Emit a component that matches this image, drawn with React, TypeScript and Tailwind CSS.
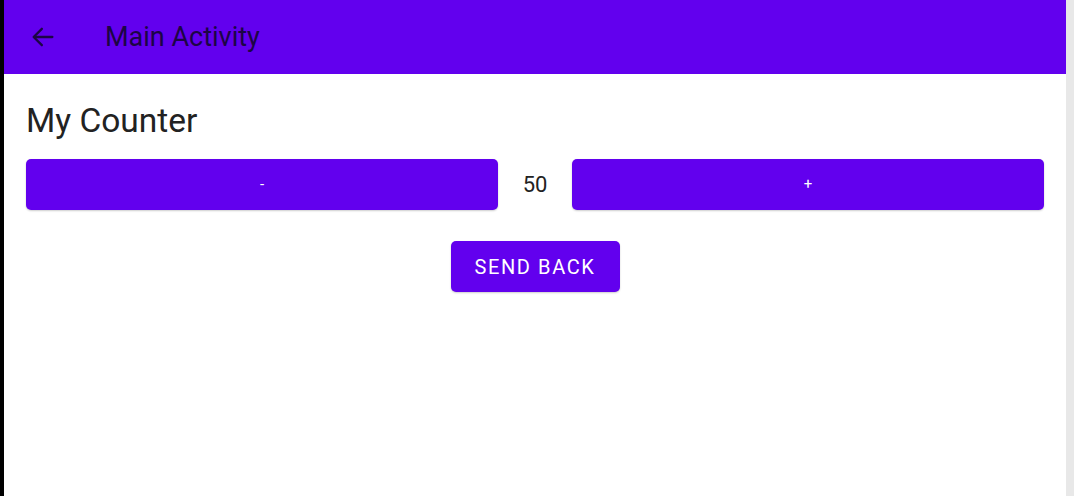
import { useState } from 'react'

const ArrowBack = () => (
  <svg width="28" height="28" viewBox="0 0 24 24" fill="none" stroke="currentColor" strokeWidth="2" strokeLinecap="round" strokeLinejoin="round">
    <path d="M20 12H4.5" />
    <path d="M11 5l-7 7 7 7" />
  </svg>
)

export default function App() {
  const [count, setCount] = useState(50)

  return (
    <div className="flex h-[496px] w-[1074px] overflow-hidden bg-white" style={{ fontFamily: 'Roboto, "Noto Sans", sans-serif' }}>
      <div className="w-[4px] bg-black" />
      <div className="flex flex-1 flex-col">
        {/* Toolbar */}
        <div className="flex h-[74px] items-center bg-[#6200ee] text-[#1c0545]">
          <div className="ml-[25px] flex w-[28px] items-center">
            <ArrowBack />
          </div>
          <span className="ml-[48px] text-[27px] leading-none">Main Activity</span>
        </div>

        {/* Content */}
        <div className="flex flex-col px-[22px] pt-[27px]">
          <h1 className="text-[33.5px] leading-[40px] text-[#222222]">My Counter</h1>

          <div className="mt-[18px] flex h-[51px] items-stretch">
            <button
              onClick={() => setCount(c => c - 1)}
              className="flex-1 rounded-[5px] bg-[#6200ee] text-[15px] text-white shadow-[0_1px_2px_rgba(0,0,0,0.2)]"
            >
              -
            </button>
            <div className="flex w-[74px] items-center justify-center text-[22px] text-[#222222]">{count}</div>
            <button
              onClick={() => setCount(c => c + 1)}
              className="flex-1 rounded-[5px] bg-[#6200ee] text-[15px] text-white shadow-[0_1px_2px_rgba(0,0,0,0.2)]"
            >
              +
            </button>
          </div>

          <div className="mt-[31px] flex justify-center">
            <button className="h-[51px] w-[169px] rounded-[5px] bg-[#6200ee] text-[20px] tracking-[1.6px] text-white shadow-[0_1px_2px_rgba(0,0,0,0.2)]">
              SEND BACK
            </button>
          </div>
        </div>
      </div>
      <div className="w-[8px] bg-[#e8e8e8]" />
    </div>
  )
}
